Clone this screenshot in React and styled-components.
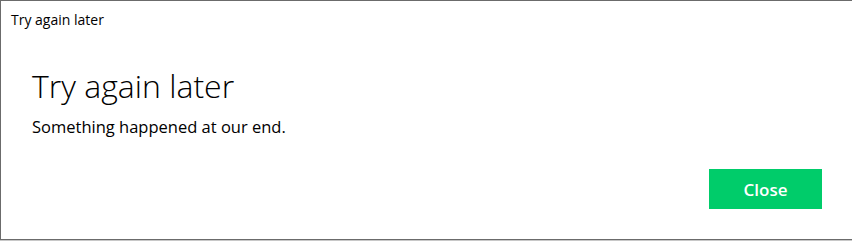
import React from "react";
import styled, { createGlobalStyle } from "styled-components";

const Global = createGlobalStyle`
  html, body {
    margin: 0;
    padding: 0;
    background: #ffffff;
  }
  body {
    font-family: "Open Sans", "Noto Sans", sans-serif;
    -webkit-font-smoothing: antialiased;
  }
`;

const Frame = styled.div`
  width: 852px;
  height: 241px;
  box-sizing: border-box;
  border-bottom: 1px solid #c8c8c8;
`;

const Window = styled.div`
  height: 240px;
  box-sizing: border-box;
  border-top: 1px solid #6b6b6b;
  border-left: 1px solid #6b6b6b;
  border-bottom: 1px solid #6b6b6b;
  display: flex;
  flex-direction: column;
  background: #fff;
`;

const TitleBar = styled.div`
  height: 37px;
  padding-left: 10px;
  display: flex;
  align-items: center;
  font-size: 14px;
  color: #000;
`;

const Body = styled.div`
  flex: 1;
  padding: 28px 30px 0 31px;
  display: flex;
  flex-direction: column;
`;

const Heading = styled.h1`
  margin: 0;
  font-weight: 300;
  font-size: 32px;
  line-height: 40px;
  color: #000;
`;

const Message = styled.p`
  margin: 10px 0 0;
  font-size: 16.5px;
  line-height: 22px;
  color: #000;
`;

const Actions = styled.div`
  margin-top: 31px;
  display: flex;
  justify-content: flex-end;
`;

const Button = styled.button`
  width: 113px;
  height: 40px;
  padding: 0;
  border: none;
  background: #00cc6a;
  color: #fff;
  font-family: "Open Sans", "Noto Sans", sans-serif;
  font-weight: 600;
  font-size: 17px;
  cursor: pointer;
`;

export default function App() {
  return (
    <Frame>
      <Global />
      <Window>
        <TitleBar>Try again later</TitleBar>
        <Body>
          <Heading>Try again later</Heading>
          <Message>Something happened at our end.</Message>
          <Actions>
            <Button>Close</Button>
          </Actions>
        </Body>
      </Window>
    </Frame>
  );
}
